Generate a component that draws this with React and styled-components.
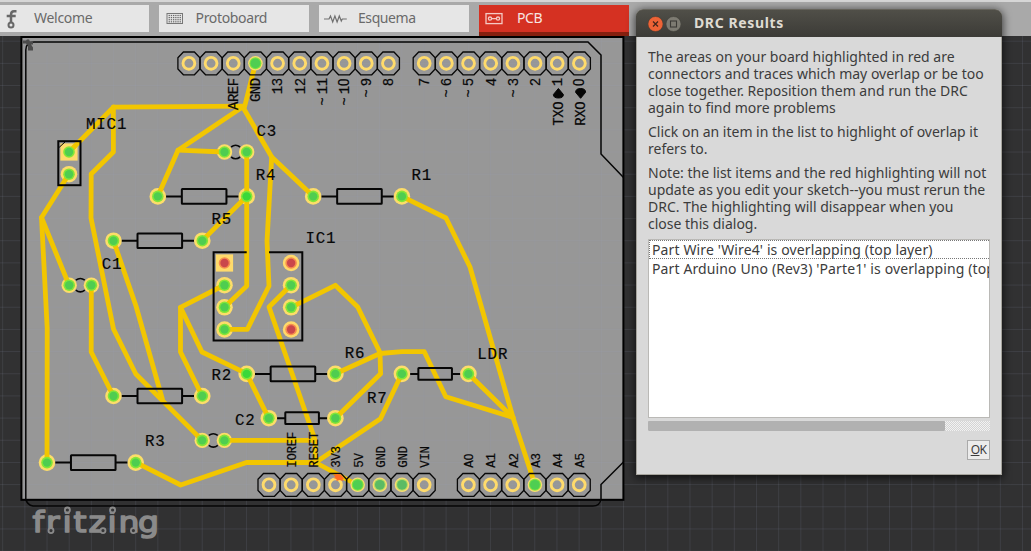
import React from "react";
import styled, { createGlobalStyle } from "styled-components";

const GlobalStyle = createGlobalStyle`
  html, body, #root { height: 100%; }
  body { margin: 0; overflow: hidden; background: #313132; font-family: "Noto Sans", "Open Sans", sans-serif; }
`;

const Window = styled.div`
  position: relative;
  display: flex;
  flex-direction: column;
  width: 1031px;
  height: 551px;
  overflow: hidden;
`;

const TabBar = styled.header`
  box-sizing: border-box;
  display: flex;
  gap: 10px;
  height: 36px;
  flex: none;
  padding-top: 3px;
  border-top: 2px solid #d6d6d6;
  background: #a9a9a9;
`;

const Tab = styled.button`
  box-sizing: border-box;
  display: flex;
  align-items: center;
  width: ${(p) => p.$width || 150}px;
  height: ${(p) => (p.$active ? 31 : 27)}px;
  padding: 0 0 2px ${(p) => p.$pad || 6}px;
  border: 0;
  border-bottom: ${(p) => (p.$active ? "4px solid #85200f" : "0")};
  background: ${(p) => (p.$active ? "#d53122" : "#e6e6e6")};
  color: ${(p) => (p.$active ? "#f7e4e1" : "#6a6a6a")};
  font: 14px "Noto Sans", sans-serif;
  letter-spacing: ${(p) => p.$spacing || 0}px;
`;

const TabIcon = styled.svg`
  flex: none;
  width: ${(p) => p.$w}px;
  height: 24px;
  margin-top: 1px;
  margin-right: ${(p) => p.$gap}px;
`;

const Canvas = styled.main`
  flex: 1;
  display: flex;
  background: #313132;
`;

const Drawing = styled.svg`
  display: block;
  width: 1031px;
  height: 515px;
`;

const Dialog = styled.section`
  position: absolute;
  left: 636px;
  top: 9px;
  display: flex;
  flex-direction: column;
  box-sizing: border-box;
  width: 366px;
  height: 466px;
  border-radius: 7px 7px 0 0;
  background: #d9d9d9;
  box-shadow: 0 2px 9px 1px rgba(0, 0, 0, 0.65);
`;

const TitleBar = styled.div`
  box-sizing: border-box;
  display: flex;
  align-items: center;
  gap: 3px;
  height: 28px;
  flex: none;
  padding-left: 12px;
  border-top: 1px solid #66645c;
  border-radius: 7px 7px 0 0;
  background: linear-gradient(#504f48, #3c3b37);
`;

const WindowButton = styled.svg`
  width: 15px;
  height: 16px;
`;

const Title = styled.h1`
  margin: 0 0 2px 10px;
  color: #dfdbd2;
  font: bold 14px "Noto Sans", sans-serif;
  letter-spacing: 0.62px;
`;

const DialogBody = styled.div`
  flex: 1;
  display: flex;
  flex-direction: column;
  box-sizing: border-box;
  padding: 11px 11px 14px;
  border: 1px solid #a6a49d;
  border-top: 0;
`;

const Paragraph = styled.p`
  display: flex;
  flex-direction: column;
  margin: 0 0 7px;
  color: #3c3c3c;
  font-size: 14px;
  line-height: 17px;
`;

const Line = styled.span`
  white-space: nowrap;
`;

const ResultList = styled.div`
  box-sizing: border-box;
  width: 342px;
  height: 179px;
  border: 1px solid #bab9b6;
  background: #fff;
  overflow: hidden;
`;

const Result = styled.div`
  box-sizing: border-box;
  height: 19px;
  padding-left: 2px;
  border: 1px dotted ${(p) => (p.$focused ? "#777" : "transparent")};
  border-right: 0;
  color: #3c3c3c;
  font-size: 14px;
  line-height: 18px;
  white-space: nowrap;
  letter-spacing: 0.12px;
`;

const ScrollTrack = styled.div`
  width: 342px;
  height: 10px;
  margin-top: 3px;
  background: repeating-conic-gradient(#f2f2f2 0 25%, #d4d4d4 0 50%) 0 0 / 2px 2px;
`;

const ScrollThumb = styled.div`
  width: 297px;
  height: 10px;
  border-radius: 1px;
  background: #b1b1b1;
`;

const OkButton = styled.button`
  box-sizing: border-box;
  align-self: flex-end;
  width: 23px;
  height: 20px;
  margin: 9px 0 0;
  padding: 0;
  border: 1px solid #aaa;
  background: #ececec;
  color: #3c3c3c;
  font: 12px/18px "Noto Sans", sans-serif;
  letter-spacing: -0.6px;
`;

const range = (n) => Array.from({ length: n }, (_, i) => i);
const PITCH = 22.17;

const WIRES = [
  "69,152 113.4,107.2 244,106.2",
  "113.4,107 113.4,152 91.2,174 91,218 113.5,329 135.8,374 202.2,440.4",
  "69,174 41.5,217.5 47.2,328 47,462.4",
  "41.5,217.5 69,285",
  "91.3,285 91.2,352 113.4,396",
  "113.4,240.5 136,306 162.3,399",
  "255.5,63.3 244,109 271.7,157 313.2,196.3",
  "244,106 178,150.2 157.8,196.3",
  "178,150.2 224.4,152",
  "271.7,157 267,241 269,286 247.3,329.3 224.4,329.3",
  "246.7,152 246.7,286 224.4,307.3",
  "246.7,196.3 202.2,240.6",
  "224.4,285 180.5,307.4 180.5,352 202.2,396",
  "180.5,307.4 202,352 246.7,373.7 268.7,418.2",
  "291,285 269,307 313,434 315,440.3 315.5,462.5",
  "224.4,440.3 315,440.3",
  "135.7,462.4 180.7,485 246.5,462.5 315.5,462.5 380.5,418.7 401.8,373.7",
  "315.5,462.5 350,481 357.6,485",
  "291,307.3 335.3,285.3 357.7,307 380,352.5 380.6,373.7 335.4,418.2",
  "335.4,373.7 380,353.5 402,351.7 424.3,351.7 445.8,396.7 513,417.5",
  "468.4,373.7 513,417.5",
  "401.8,196.3 446,218 470,267 513,417.5 535,484.7",
];

const PADS = [
  [69, 152, "sq"], [69, 174.2], [157.8, 196.4], [246.7, 196.4, "hot"], [313.2, 196.4], [401.9, 196.4],
  [113.5, 240.7], [202.3, 240.7], [113.5, 396], [202.3, 396], [47, 462.6], [135.7, 462.6],
  [246.7, 373.9, "hot"], [335.4, 373.9], [401.9, 373.9], [468.4, 373.9], [268.8, 418.2], [335.4, 418.2],
  [224.5, 152, "cap"], [246.7, 152, "cap"], [69.2, 285.2, "cap"], [91.4, 285.2, "cap"],
  [202.2, 440.4, "cap"], [224.4, 440.4, "cap"],
  [224.5, 263, "sqred"], [224.5, 285.2], [224.5, 307.3], [224.5, 329.5],
  [291.1, 263, "red"], [291.1, 285.2], [291.1, 307.3], [291.1, 329.5, "red"],
];

const RESISTORS = [
  [157.8, 246.7, 196.4], [313.2, 401.9, 196.4], [113.5, 202.3, 240.7], [113.5, 202.3, 396],
  [47, 135.7, 462.6], [246.7, 335.4, 373.9], [401.9, 468.4, 373.9, true], [268.8, 335.4, 418.2, true],
];

const LABELS = [
  ["MIC1", 87, 129.3], ["C3", 257.5, 136], ["R4", 256.8, 180], ["R1", 412.5, 180],
  ["R5", 212.5, 224.2], ["IC1", 306.5, 242.7], ["C1", 102.8, 269.2], ["R2", 212.5, 379.7],
  ["R6", 345.7, 357.7], ["R7", 368, 402.9], ["C2", 236, 424.5], ["R3", 146, 446.2], ["LDR", 478.3, 358.9],
];

const TOP_LEFT = ["", "", "AREF", "GND", "13", "12", "~11", "~10", "~9", "8"];
const TOP_RIGHT = ["7", "~6", "~5", "4", "~3", "2", "1", "0"];
const BOTTOM = ["", "IOREF", "RESET", "3V3", "5V", "GND", "GND", "VIN"];
const ANALOG = ["A0", "A1", "A2", "A3", "A4", "A5"];

const SilkText = styled.text`
  fill: #070707;
  stroke: #070707;
  stroke-width: 0.2px;
  font-family: "Liberation Mono", monospace;
  font-size: ${(p) => p.$size}px;
  white-space: pre;
`;

/* Zero is set in a face whose numeral has no dot in it. */
const PlainZero = styled.tspan`
  font-family: Roboto, sans-serif;
`;

function Label({ text, x, y }) {
  return (
    <SilkText $size={15.8} x={text.split("").map((_, i) => x - 1 + i * 10.3).join(" ")} y={y}>
      {text}
    </SilkText>
  );
}

function PinLabel({ text, x, y, step, size, end }) {
  const shift = end ? -(text.length * step) + 0.6 : -0.4;
  const xs = text.split("").map((c, i) => shift + i * step - (c === "~" ? 3.6 : 0));
  const body = text.endsWith("0") ? text.slice(0, -1) : text;
  return (
    <SilkText $size={size} transform={`translate(${x} ${y}) rotate(-90)`} x={xs.join(" ")}>
      {body}
      {body !== text && <PlainZero>0</PlainZero>}
    </SilkText>
  );
}

function Header({ x, y, labels, live = {}, top }) {
  return labels.map((label, i) => {
    const cx = x + i * PITCH;
    const state = live[i];
    return (
      <g key={i}>
        <path
          d={`M${cx - 11} ${y - 5.5}l5.5 -5.8h11l5.5 5.8v11.2l-5.5 5.8h-11l-5.5 -5.8z`}
          fill="none" stroke="#080808" strokeWidth="1.3"
        />
        {state ? (
          <>
            <circle cx={cx} cy={y} r="7.3" fill="#fbdd70" />
            <circle cx={cx} cy={y} r="6" fill={state === "dim" ? "#b5dc62" : "#80e63c"} />
            <circle cx={cx} cy={y} r="4.9" fill={state === "dim" ? "#5bbb64" : "#4fce52"} />
          </>
        ) : (
          <circle cx={cx} cy={y} r="5.9" fill="none" stroke="#ffdb6b" strokeWidth="2.9" />
        )}
        {label && (
          <PinLabel
            text={label} x={cx + 4.9} y={top ? 79 : 467.3}
            step={top ? 7.9 : 7.1} size={top ? 14 : 12.4} end={top}
          />
        )}
      </g>
    );
  });
}

function Pad({ x, y, kind = "" }) {
  const red = kind.includes("red");
  const r = kind === "cap" ? 7.7 : 8.3;
  return kind.startsWith("sq") ? (
    <rect x={x - 8.6} y={y - 8.6} width="17.2" height="17.2" fill="#ffdb6b" />
  ) : (
    <circle cx={x} cy={y} r={r} fill={red ? "#ffd96a" : "#fddd69"} />
  );
}

function PadCore({ x, y, kind = "" }) {
  const red = kind.includes("red");
  return (
    <g>
      <circle cx={x} cy={y} r="5.8" fill={red ? "#f68d4f" : "#84e637"} />
      <circle cx={x} cy={y} r="4.2" fill={red ? "#ca474b" : kind === "hot" ? "#39d83a" : "#4fcd50"} />
    </g>
  );
}

function Resistor({ a, b, y, small }) {
  const mid = (a + b) / 2 + (small ? 0 : 1.9);
  const hw = small ? 16.8 : 22.3;
  const hh = small ? 5.9 : 7.3;
  return (
    <g fill="none" stroke="#060606" strokeWidth="2">
      <path d={`M${a + 8.3} ${y}H${mid - hw}M${mid + hw} ${y}H${b - 8.3}`} />
      <rect x={mid - hw} y={y - hh} width={hw * 2} height={hh * 2} rx="0.5" />
    </g>
  );
}

function Capacitor({ x, y }) {
  return (
    <path
      d={`M${x - 4.5} ${y - 5}Q${x} ${y - 8.4} ${x + 4.5} ${y - 5}M${x - 4.5} ${y + 5}Q${x} ${y + 8.4} ${x + 4.5} ${y + 5}`}
      fill="none" stroke="#080808" strokeWidth="1.6"
    />
  );
}

const WATERMARK_STRETCH = 1.14;
const WATERMARK_X = [32.6, 46, 62.4, 73.6, 88.6, 107.6, 118.4, 138];

function Watermark() {
  return (
    <g fill="#8a8a8a" stroke="#8a8a8a">
      <text
        transform={`scale(${WATERMARK_STRETCH} 1)`}
        x={WATERMARK_X.map((x) => x / WATERMARK_STRETCH).join(" ")} y="531.8"
        fontFamily="'DejaVu Sans', sans-serif" fontSize="29" strokeWidth="1.5" strokeLinejoin="round"
      >
        fritzing
      </text>
      <g fill="#353536" strokeWidth="1.8">
        {[[67.4, 510], [112.6, 510], [51, 530.6], [103, 530.6], [133.4, 530.6]].map(([x, y]) => (
          <circle key={x} cx={x} cy={y} r="2.5" />
        ))}
      </g>
    </g>
  );
}

function Board() {
  return (
    <Drawing viewBox="0 36 1031 515">
      <rect x="21.4" y="37" width="602" height="462.8" fill="#979797" />
      <g stroke="#9aa6be" strokeOpacity="0.13" strokeWidth="1">
        {range(47).map((i) => <path key={"v" + i} d={`M${2.7 + i * PITCH} 36V551`} />)}
        {range(24).map((i) => <path key={"h" + i} d={`M0 ${41.2 + i * PITCH}H1031`} />)}
      </g>
      <rect x="21.4" y="37" width="602" height="462.8" fill="none" stroke="#000" strokeWidth="2" />
      <path
        d="M25.8 499V50Q26 42 34 42H588L601 55V154L623.5 177.5M623.5 462L601 484.5V499Q600 506 593 506H33Q27 505 25.8 499"
        fill="none" stroke="#050505" strokeWidth="1.5"
      />
      <path d="M23 40.5h3l1-1h2l1 2h3v3h-2l2 3v3h-5v-5l-2-2h-3z" fill="#4b4b4b" />

      {PADS.map(([x, y, kind]) => <Pad key={`${x}-${y}`} x={x} y={y} kind={kind} />)}
      <g fill="none" stroke="#f2c600" strokeWidth="4.8" strokeLinejoin="round" strokeLinecap="round">
        {WIRES.map((points) => <polyline key={points} points={points} />)}
      </g>
      {PADS.map(([x, y, kind]) => <PadCore key={`${x}-${y}`} x={x} y={y} kind={kind} />)}

      {RESISTORS.map(([a, b, y, small]) => <Resistor key={`${a}-${y}`} a={a} b={b} y={y} small={small} />)}
      <Capacitor x={235.6} y={152} />
      <Capacitor x={80.3} y={285.2} />
      <Capacitor x={213.3} y={440.4} />
      <g fill="none" stroke="#060606" strokeWidth="2">
        <rect x="58.3" y="141.2" width="22.2" height="44" />
        <path d="M59 147.5L65 142" strokeWidth="1" />
        <path d="M246.7 252.2H213.6V340.5H302.3V252.2H269" />
      </g>

      <Header x={188.9} y={63.3} labels={TOP_LEFT} live={{ 3: "on" }} top />
      <Header x={424.2} y={63.3} labels={TOP_RIGHT} top />
      <Header x={269} y={484.8} labels={BOTTOM} live={{ 4: "on", 5: "dim", 6: "dim" }} />
      <Header x={468.4} y={484.8} labels={ANALOG} live={{ 3: "on" }} />
      <path d="M333.5 475l4-1 4 1 1 2 2 1-2 1 1 2-4-1-3 1 0-2-3-1 2-1z" fill="#ff6a22" />
      <path d="M558.4 88.5l5 6q0 3.5-5 3.5t-5-3.5zM580.6 98.3l5-6q0-3.8-5-3.8t-5 3.8z" fill="#050505" stroke="#050505" />
      <PinLabel text="TXO" x={563} y={125.3} step={8} size={14} />
      <PinLabel text="RXO" x={585.2} y={125.3} step={8} size={14} />
      {LABELS.map(([text, x, y]) => <Label key={text} text={text} x={x} y={y} />)}
      <Watermark />
    </Drawing>
  );
}

function FritzingIcon() {
  return (
    <TabIcon $w={12} $gap={16} viewBox="0 0 12 24">
      <g fill="none" stroke="#686868" strokeWidth="2.5">
        <path d="M10.5 5.3H8Q5 5.3 5 8.8v8M0.7 10.1h9" />
        <circle cx="5" cy="19" r="2.5" strokeWidth="2" />
      </g>
    </TabIcon>
  );
}

function BreadboardIcon() {
  return (
    <TabIcon $w={18} $gap={12} viewBox="0 0 18 24">
      <rect x="1" y="7.5" width="15.5" height="10" fill="none" stroke="#777" />
      {range(4).map((r) => range(6).map((c) => (
        <rect key={`${r}${c}`} x={2.6 + c * 2.2} y={8.9 + r * 2.1} width="1.3" height="1.2" fill="#686868" />
      )))}
    </TabIcon>
  );
}

function SchematicIcon() {
  return (
    <TabIcon $w={24} $gap={10} viewBox="0 0 24 24">
      <path d="M0 13h5l1.5-3 2.2 6 2.2-6 2.2 6 2.2-6 2 5 1-2h4.5" fill="none" stroke="#717171" strokeWidth="1.2" />
    </TabIcon>
  );
}

function PcbIcon() {
  return (
    <TabIcon $w={18} $gap={14} viewBox="0 0 18 24">
      <g fill="none" stroke="#f5c9c4" strokeWidth="1.3">
        <rect x="1" y="7.6" width="16" height="10" />
        <circle cx="5" cy="12.6" r="1.6" />
        <circle cx="13" cy="12.6" r="1.6" />
        <path d="M6.6 12.6h4.8" />
      </g>
    </TabIcon>
  );
}

export default function App() {
  return (
    <Window>
      <GlobalStyle />
      <TabBar>
        <Tab $width={149} $spacing={-0.28}><FritzingIcon />Welcome</Tab>
        <Tab $pad={6.5} $spacing={-0.34}><BreadboardIcon />Protoboard</Tab>
        <Tab $pad={5} $spacing={-0.42}><SchematicIcon />Esquema</Tab>
        <Tab $active $spacing={-0.4}><PcbIcon />PCB</Tab>
      </TabBar>
      <Canvas><Board /></Canvas>
      <Dialog>
        <TitleBar>
          <WindowButton viewBox="0 0 15 16">
            <circle cx="7.5" cy="8" r="7.5" fill="#ee6336" stroke="#333029" strokeWidth="0.4" />
            <path d="M5 5.5l5 5m0-5l-5 5" stroke="#46271c" strokeWidth="1.3" />
          </WindowButton>
          <WindowButton viewBox="0 0 15 16">
            <circle cx="7.5" cy="8" r="7.5" fill="#7d7b72" stroke="#33322e" strokeWidth="0.4" />
            <rect x="4.5" y="5" width="6" height="6" fill="none" stroke="#3c3b37" strokeWidth="1.1" />
          </WindowButton>
          <Title>DRC Results</Title>
        </TitleBar>
        <DialogBody>
          <Paragraph>
            <Line>The areas on your board highlighted in red are</Line>
            <Line>connectors and traces which may overlap or be too</Line>
            <Line>close together. Reposition them and run the DRC</Line>
            <Line>again to find more problems</Line>
          </Paragraph>
          <Paragraph>
            <Line>Click on an item in the list to highlight of overlap it</Line>
            <Line>refers to.</Line>
          </Paragraph>
          <Paragraph>
            <Line>Note: the list items and the red highlighting will not</Line>
            <Line>update as you edit your sketch--you must rerun the</Line>
            <Line>DRC. The highlighting will disappear when you</Line>
            <Line>close this dialog.</Line>
          </Paragraph>
          <ResultList>
            <Result $focused>Part Wire 'Wire4' is overlapping (top layer)</Result>
            <Result>Part Arduino Uno (Rev3) 'Parte1' is overlapping (top layer)</Result>
          </ResultList>
          <ScrollTrack><ScrollThumb /></ScrollTrack>
          <OkButton><u>O</u>K</OkButton>
        </DialogBody>
      </Dialog>
    </Window>
  );
}
